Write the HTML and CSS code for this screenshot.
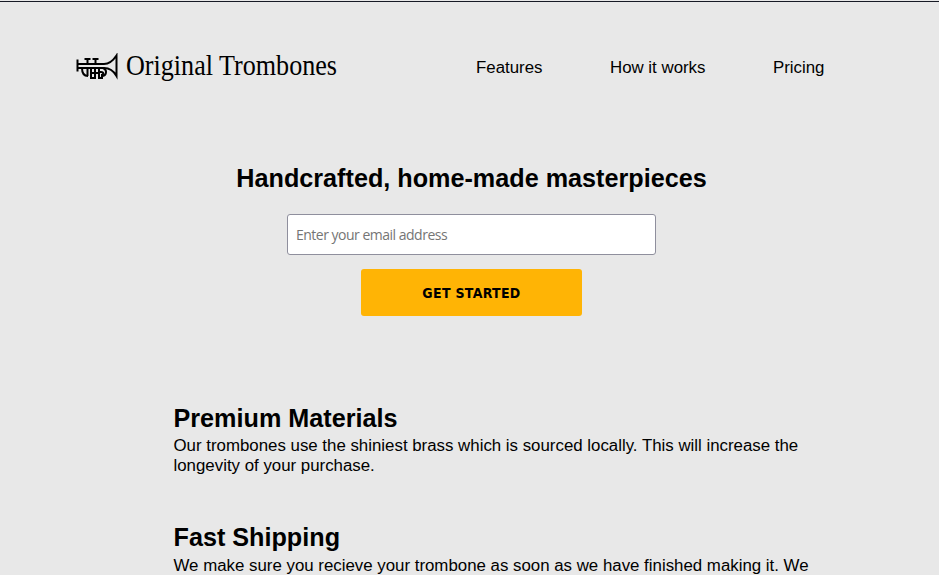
FILE: index.html
```html
<!DOCTYPE html>
<html lang="en">
<head>
<meta charset="utf-8">
<title>Original Trombones</title>
<link rel="stylesheet" href="styles.css">
</head>
<body>
<header class="header">
  <a class="logo" href="#">
    <svg class="logo-icon" width="43" height="28" viewBox="0 0 43 28" fill="none" stroke="#000" stroke-width="2">
      <path d="M1.5 6.5V18.5M1 11H28C33 11 37.5 7 40.5 2.5V23C38 18.5 34 15 28 15H1"/>
      <path d="M6 15C6 21 8 23 12 23M25 23C31 23.5 31.5 17 27 15"/>
      <path d="M11.5 5V11M19.5 5V11M8.5 6H14.5M16.5 6H22.5M11.5 15V23M15 15V25H19V15M15 20H23M23 15V25H26V21M23 19H25C28 19 28 22 25 22"/>
    </svg>
    <svg class="logo-name" width="212" height="36" viewBox="0 0 212 36"><text x="0" y="25" textLength="211" lengthAdjust="spacingAndGlyphs">Original Trombones</text></svg>
  </a>
  <nav class="nav"><a href="#features">Features</a><a href="#how">How it works</a><a href="#pricing">Pricing</a></nav>
</header>
<main>
  <section class="hero">
    <h1>Handcrafted, home-made masterpieces</h1>
    <form class="form">
      <input type="email" placeholder="Enter your email address">
      <button type="button">GET STARTED</button>
    </form>
  </section>
  <section class="features" id="features">
    <article><h2>Premium Materials</h2><p>Our trombones use the shiniest brass which is sourced locally. This will increase the<br>longevity of your purchase.</p></article>
    <article><h2>Fast Shipping</h2><p class="lower">We make sure you recieve your trombone as soon as we have finished making it. We</p></article>
  </section>
</main>
</body>
</html>
```
FILE: styles.css
```css
* { box-sizing: border-box; margin: 0; padding: 0; }
body {
  height: 575px;
  overflow: hidden;
  padding-top: 1px;
  background: #e8e8e8;
  color: #000;
  font: 16.85px/20px "Liberation Sans", Arial, sans-serif;
}
.header {
  display: flex;
  align-items: flex-start;
  height: 162px;
  padding: 48px 0 0 76px;
  border-top: 1px solid #171a25;
}
.logo { display: flex; width: 400px; }
.logo-icon { margin: 3px 7px 0 0; }
.logo-name { font: 29px "Liberation Serif", serif; overflow: visible; }
.nav { display: flex; gap: 67.5px; padding-top: 8px; }
.nav a { color: inherit; text-decoration: none; white-space: nowrap; }
h1, h2 { font-size: 25.2px; line-height: 30px; white-space: nowrap; }
.hero { display: flex; flex-direction: column; align-items: center; height: 240px; padding-left: 4px; }
.form { display: flex; flex-direction: column; align-items: center; margin-top: 21px; }
.form input {
  width: 369px;
  height: 41px;
  padding: 0 8px;
  border: 1px solid #8f8f9d;
  border-radius: 3px;
  background: #fff;
  font: 14px "Open Sans", sans-serif;
  letter-spacing: -0.5px;
}
.form input::placeholder { color: #757575; }
.form button {
  width: 221px;
  height: 47px;
  margin-top: 14px;
  border: 0;
  border-radius: 3px;
  background: #ffb405;
  color: #000;
  font: bold 14px "DejaVu Sans Condensed", "DejaVu Sans", sans-serif;
  font-stretch: condensed;
  letter-spacing: 0.3px;
}
.features { padding-left: 173.5px; }
.features article { height: 119px; }
.features p { margin-top: 3px; white-space: nowrap; }
.features .lower { margin-top: 4px; }
```
